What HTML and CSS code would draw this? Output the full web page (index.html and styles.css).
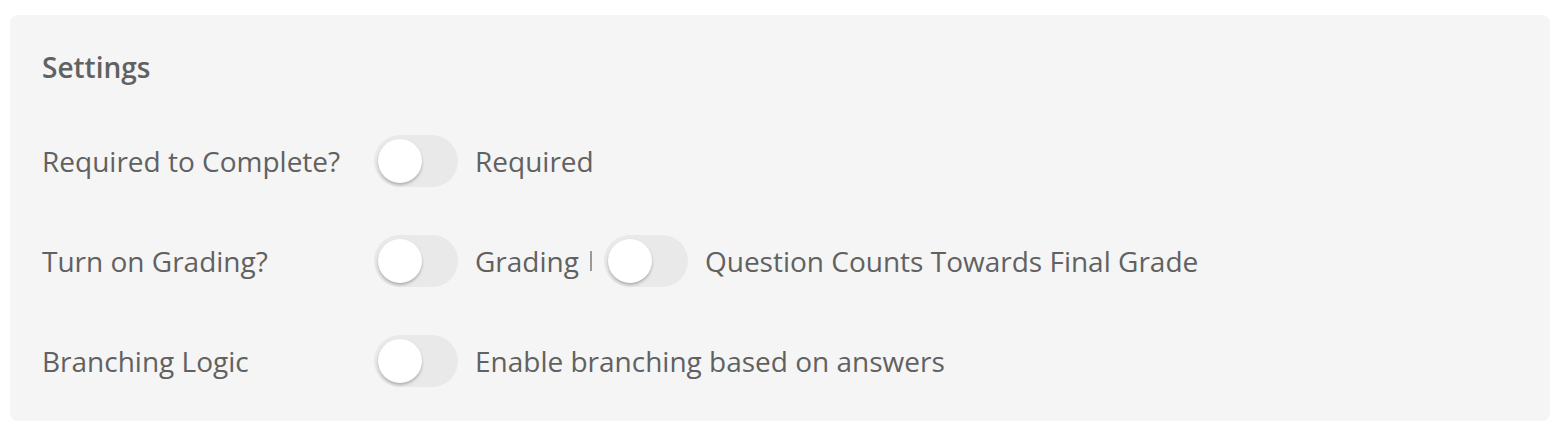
FILE: index.html
```html
<!DOCTYPE html>
<html>
<head>
<meta charset="utf-8">
<link rel="stylesheet" href="styles.css">
</head>
<body>
<section class="panel">
  <h2 class="title">Settings</h2>
  <div class="rows">
    <div class="label">Required to Complete?</div>
    <div class="controls">
      <span class="toggle"><span class="knob"></span></span>
      <span class="text">Required</span>
    </div>

    <div class="label">Turn on Grading?</div>
    <div class="controls">
      <span class="toggle"><span class="knob"></span></span>
      <span class="text">Grading</span>
      <span class="sep"></span>
      <span class="toggle"><span class="knob"></span></span>
      <span class="text">Question Counts Towards Final Grade</span>
    </div>

    <div class="label">Branching Logic</div>
    <div class="controls">
      <span class="toggle"><span class="knob"></span></span>
      <span class="text">Enable branching based on answers</span>
    </div>
  </div>
</section>
</body>
</html>
```
FILE: styles.css
```css
html, body {
  margin: 0;
  padding: 0;
  background: #ffffff;
}
body {
  font-family: "Open Sans", "Noto Sans", sans-serif;
  color: #616161;
}
.panel {
  margin: 15px 14px 0 10px;
  height: 406px;
  box-sizing: border-box;
  background: #f5f5f5;
  border-radius: 8px;
  padding: 34px 32px 34px 32px;
}
.title {
  margin: 0;
  font-size: 28px;
  line-height: 36px;
  font-weight: 600;
  color: #616161;
}
.rows {
  margin-top: 50px;
  display: grid;
  grid-template-columns: 332px 1fr;
  row-gap: 48px;
  align-items: center;
}
.label {
  font-size: 28px;
  line-height: 36px;
}
.controls {
  display: flex;
  align-items: center;
}
.toggle {
  width: 84px;
  height: 52px;
  border-radius: 26px;
  background: #e9e9e9;
  box-sizing: border-box;
  padding: 4px;
  display: flex;
  align-items: center;
  flex: none;
}
.knob {
  width: 44px;
  height: 44px;
  border-radius: 50%;
  background: #ffffff;
  box-shadow: 0 2px 3px rgba(0, 0, 0, 0.25);
}
.text {
  font-size: 28px;
  line-height: 36px;
  margin-left: 17px;
}
.sep {
  width: 2px;
  height: 20px;
  background: #9a9a9a;
  margin: 0 12px 0 11px;
  flex: none;
}
```
